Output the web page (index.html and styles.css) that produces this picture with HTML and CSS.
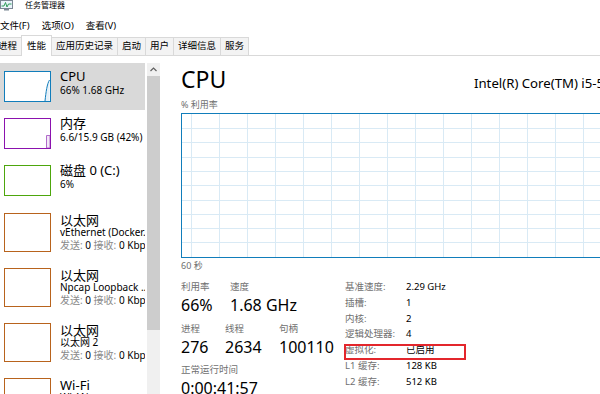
FILE: index.html
```html
<!DOCTYPE html>
<html lang="zh-CN">
<head>
<meta charset="utf-8">
<title>任务管理器</title>
<link rel="stylesheet" href="styles.css">
</head>
<body>
<div class="window">
  <header class="titlebar">
    <svg class="app-icon" width="13" height="11" viewBox="0 0 13 11">
      <rect x="0.5" y="0.5" width="12" height="8" fill="#eaf3fb" stroke="#7b8794"/>
      <polyline points="1.5,6 4,6 5.5,2.5 7,7 8.5,4 11.5,4" fill="none" stroke="#2f9e5a"/>
      <rect x="4" y="9" width="5" height="1.5" fill="#7b8794"/>
    </svg>
    <span class="title">任务管理器</span>
  </header>
  <nav class="menubar">
    <span>文件(F)</span><span>选项(O)</span><span>查看(V)</span>
  </nav>
  <div class="tabs">
    <div class="tab first">进程</div>
    <div class="tab active">性能</div>
    <div class="tab">应用历史记录</div>
    <div class="tab">启动</div>
    <div class="tab">用户</div>
    <div class="tab">详细信息</div>
    <div class="tab last">服务</div>
  </div>
  <div class="main">
    <aside class="sidebar">
      <div class="list">
        <div class="item selected">
          <div class="thumb cpu">
            <svg width="45" height="29" viewBox="0 0 45 29">
              <path d="M40 29 C41 20 42 12 44.5 8 L44.5 29 Z" fill="#e6f1f9"/>
              <path d="M40 29 C41 20 42 12 44.5 8" fill="none" stroke="#117dbb" stroke-width="1"/>
            </svg>
          </div>
          <div class="info">
            <div class="name">CPU</div>
            <div class="sub">66% 1.68 GHz</div>
          </div>
        </div>
        <div class="item">
          <div class="thumb mem">
            <svg width="45" height="29" viewBox="0 0 45 29">
              <path d="M41.5 29 L41.5 16.5 L45 16.5 L45 29 Z" fill="#f3e8f7" stroke="#b06bca" stroke-width="1"/>
            </svg>
          </div>
          <div class="info">
            <div class="name">内存</div>
            <div class="sub">6.6/15.9 GB (42%)</div>
          </div>
        </div>
        <div class="item disk-item">
          <div class="thumb disk"></div>
          <div class="info">
            <div class="name">磁盘 0 (C:)</div>
            <div class="sub">6%</div>
          </div>
        </div>
        <div class="item tall">
          <div class="thumb eth"></div>
          <div class="info">
            <div class="name">以太网</div>
            <div class="sub">vEthernet (Docker...</div>
            <div class="sub net"><span class="dim">发送:</span> 0 <span class="dim">接收:</span> 0 Kbps</div>
          </div>
        </div>
        <div class="item tall">
          <div class="thumb eth"></div>
          <div class="info">
            <div class="name">以太网</div>
            <div class="sub">Npcap Loopback ...</div>
            <div class="sub net"><span class="dim">发送:</span> 0 <span class="dim">接收:</span> 0 Kbps</div>
          </div>
        </div>
        <div class="item tall">
          <div class="thumb eth"></div>
          <div class="info">
            <div class="name">以太网</div>
            <div class="sub">以太网 2</div>
            <div class="sub net"><span class="dim">发送:</span> 0 <span class="dim">接收:</span> 0 Kbps</div>
          </div>
        </div>
        <div class="item tall">
          <div class="thumb eth"></div>
          <div class="info">
            <div class="name">Wi-Fi</div>
            <div class="sub">WLAN</div>
            <div class="sub net"><span class="dim">发送:</span> 0 <span class="dim">接收:</span> 0 Kbps</div>
          </div>
        </div>
      </div>
      <div class="scrollbar">
        <div class="arrow">
          <svg width="7" height="5" viewBox="0 0 7 5"><polyline points="0.5,4 3.5,1 6.5,4" fill="none" stroke="#606060" stroke-width="1.2"/></svg>
        </div>
        <div class="scroll-thumb"></div>
      </div>
    </aside>
    <section class="content">
      <div class="head">
        <h1>CPU</h1>
        <div class="model">Intel(R) Core(TM) i5-5200U CPU @ 2.20GHz</div>
      </div>
      <div class="axis-label">% 利用率</div>
      <div class="graph">
        <svg width="438" height="143" viewBox="0 0 438 143" shape-rendering="crispEdges">
          <g stroke="#d9eaf5" stroke-width="1">
            <path d="M0 14.5H438M0 28.5H438M0 43.5H438M0 57.5H438M0 71.5H438M0 86.5H438M0 100.5H438M0 114.5H438M0 128.5H438"/>
            <path d="M9.5 0V143M37.5 0V143M65.5 0V143M93.5 0V143M121.5 0V143M149.5 0V143M177.5 0V143M205.5 0V143M233.5 0V143M261.5 0V143M289.5 0V143M317.5 0V143M345.5 0V143M373.5 0V143M401.5 0V143M429.5 0V143"/>
          </g>
        </svg>
      </div>
      <div class="axis-label time">60 秒</div>
      <div class="details">
        <div class="stats">
          <div class="stat-row">
            <div class="stat c49"><div class="label">利用率</div><div class="value">66%</div></div>
            <div class="stat"><div class="label">速度</div><div class="value">1.68 GHz</div></div>
          </div>
          <div class="stat-row">
            <div class="stat c44"><div class="label">进程</div><div class="value">276</div></div>
            <div class="stat c54"><div class="label">线程</div><div class="value">2634</div></div>
            <div class="stat"><div class="label">句柄</div><div class="value">100110</div></div>
          </div>
          <div class="stat-row">
            <div class="stat"><div class="label">正常运行时间</div><div class="value">0:00:41:57</div></div>
          </div>
        </div>
        <div class="specs">
          <div class="spec"><span class="k">基准速度:</span><span class="v">2.29 GHz</span></div>
          <div class="spec"><span class="k">插槽:</span><span class="v">1</span></div>
          <div class="spec"><span class="k">内核:</span><span class="v">2</span></div>
          <div class="spec"><span class="k">逻辑处理器:</span><span class="v">4</span></div>
          <div class="spec marked"><span class="k">虚拟化:</span><span class="v">已启用</span><span class="mark"></span></div>
          <div class="spec"><span class="k">L1 缓存:</span><span class="v">128 KB</span></div>
          <div class="spec"><span class="k">L2 缓存:</span><span class="v">512 KB</span></div>
        </div>
      </div>
    </section>
  </div>
</div>
</body>
</html>
```
FILE: styles.css
```css
* { box-sizing: border-box; margin: 0; padding: 0; }
html, body { width: 600px; height: 394px; overflow: hidden; background: #fff; }
body {
  font-family: "Noto Sans", "Noto Sans CJK SC", sans-serif;
  font-size: 9.5px;
  color: #000;
}
.window {
  width: 600px;
  height: 394px;
  display: flex;
  flex-direction: column;
  overflow: hidden;
}

/* title + menu */
.titlebar { height: 16px; display: flex; align-items: flex-start; gap: 12px; flex: none; }
.app-icon { flex: none; }
.title { font-size: 8px; line-height: 10px; color: #000; }
.menubar {
  height: 19px;
  display: flex;
  align-items: center;
  gap: 12px;
  line-height: 19px;
  flex: none;
  white-space: nowrap;
}

/* tabs */
.tabs {
  height: 21px;
  display: flex;
  align-items: flex-end;
  border-bottom: 1px solid #d9d9d9;
  flex: none;
}
.tab {
  height: 18px;
  padding: 0 4px;
  border-top: 1px solid #d9d9d9;
  border-left: 1px solid #d9d9d9;
  background: #f3f3f3;
  line-height: 15px;
  white-space: nowrap;
}
.tab.first { margin-left: -7px; }
.tab.last { border-right: 1px solid #d9d9d9; }
.tab.active {
  height: 21px;
  margin-bottom: -1px;
  padding: 0 5px;
  background: #fff;
  border-right: 1px solid #d9d9d9;
  line-height: 19px;
}
.tab.active + .tab { border-left: none; }

/* main */
.main { flex: 1; display: flex; min-height: 0; }
.sidebar {
  width: 160px;
  flex: none;
  display: flex;
  gap: 2px;
  padding-top: 7px;
}
.list { width: 145px; flex: none; overflow: hidden; }
.item {
  display: flex;
  gap: 9px;
  padding: 8px 0 8px 4px;
  white-space: nowrap;
}
.item.selected { background: #d9d9d9; }
.item.disk-item { padding-bottom: 9px; }
.item.tall { padding-bottom: 7px; }
.thumb {
  width: 47px;
  height: 31px;
  flex: none;
  border: 1px solid #117dbb;
  background: #fff;
}
.thumb svg { display: block; }
.item.tall .thumb { height: 39px; }
.thumb.mem { border-color: #8b12ae; }
.thumb.disk { border-color: #4da60c; }
.thumb.eth { border-color: #b8631d; }
.info { margin-top: -3px; }
.name { font-size: 13px; line-height: 16px; }
.sub { font-size: 10px; line-height: 13px; }
.item.tall .info { margin-top: 0; }
.item.tall .name { line-height: 14px; }
.item.tall .sub { line-height: 11px; }
.item.tall .sub.net { line-height: 15px; }
.dim { color: #8a8a8a; }

.scrollbar {
  width: 13px;
  flex: none;
  background: #f0f0f0;
  display: flex;
  flex-direction: column;
}
.arrow {
  height: 13px;
  display: flex;
  align-items: center;
  justify-content: center;
}
.arrow svg { display: block; }
.scroll-thumb { height: 254px; background: #cdcdcd; }

/* content */
.content {
  flex: 1;
  min-width: 0;
  overflow: hidden;
  padding: 9px 0 0 21px;
}
.head { display: flex; align-items: baseline; height: 28px; white-space: nowrap; }
.head h1 {
  width: 293px;
  flex: none;
  font-size: 23px;
  font-weight: 400;
  line-height: 28px;
}
.model { font-size: 13.2px; line-height: 18px; }
.axis-label {
  margin-top: 6px;
  font-size: 9px;
  line-height: 12px;
  color: #707070;
}
.axis-label.time { margin-top: 2px; }
.graph {
  width: 440px;
  height: 145px;
  margin-top: 2px;
  border: 1px solid #117dbb;
}
.graph svg { display: block; }

.details { display: flex; margin-top: 7px; white-space: nowrap; }
.stats { width: 164px; flex: none; padding-top: 1px; }
.stat-row { display: flex; margin-bottom: 5.5px; }
.stat.c49 { width: 49px; }
.stat.c44 { width: 44px; }
.stat.c54 { width: 54px; }
.label { font-size: 9.5px; line-height: 14px; color: #707070; }
.value { font-size: 16px; line-height: 22px; }

.specs { display: flex; flex-direction: column; }
.spec { display: flex; height: 15.8px; line-height: 15.8px; font-size: 9.5px; }
.spec .k { width: 61px; color: #707070; }
.spec .v { color: #000; }
.spec.marked { position: relative; }
.mark {
  position: absolute;
  left: -1px;
  top: 1.8px;
  width: 122px;
  height: 16px;
  border: 2px solid #e3262c;
}
```
